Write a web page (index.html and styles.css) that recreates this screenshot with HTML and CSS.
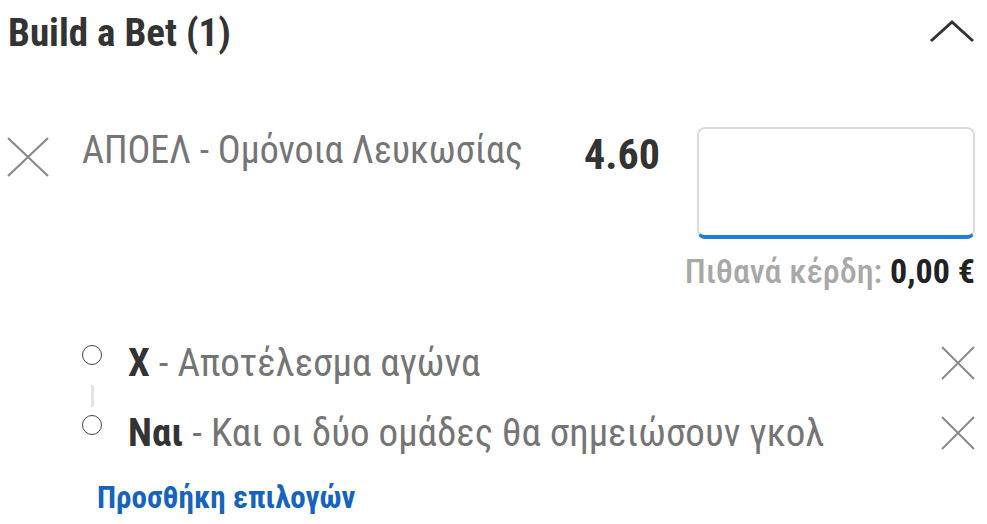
FILE: index.html
```html
<!DOCTYPE html>
<html lang="el">

<head>
  <meta charset="UTF-8">
  <meta name="viewport" content="width=device-width, initial-scale=1.0">
  <title>Build a Bet</title>
  <link rel="stylesheet" href="styles.css">
</head>

<body>
  <div class="slip">
    <!-- 标题 -->
    <div class="slip-head">
      <h2 class="slip-title">Build a Bet (1)</h2>
      <svg class="chevron" width="48" height="26" viewBox="0 0 48 26">
        <polyline points="3,23 24,4 45,23" fill="none" stroke="#333" stroke-width="3" />
      </svg>
    </div>

    <div class="bet-row">
      <svg class="remove big" width="42" height="40" viewBox="0 0 42 40">
        <path d="M1 1 L41 39 M41 1 L1 39" stroke="#8a8a8a" stroke-width="2.2" />
      </svg>
      <div class="bet-name">ΑΠΟΕΛ - Ομόνοια Λευκωσίας</div>
      <div class="bet-odds">4.60</div>
      <div class="stake"></div>
    </div>

    <div class="returns">Πιθανά κέρδη: <b>0,00 €</b></div>

    <ul class="legs">
      <li class="leg">
        <span class="dot"></span>
        <span class="leg-text"><b>X</b> - Αποτέλεσμα αγώνα</span>
        <svg class="remove" width="34" height="34" viewBox="0 0 34 34">
          <path d="M1 1 L33 33 M33 1 L1 33" stroke="#8a8a8a" stroke-width="2" />
        </svg>
      </li>
      <li class="leg">
        <span class="dot"></span>
        <span class="leg-text"><b>Ναι</b> - Και οι δύο ομάδες θα σημειώσουν γκολ</span>
        <svg class="remove" width="34" height="34" viewBox="0 0 34 34">
          <path d="M1 1 L33 33 M33 1 L1 33" stroke="#8a8a8a" stroke-width="2" />
        </svg>
      </li>
    </ul>

    <a class="add-link" href="#">Προσθήκη επιλογών</a>
  </div>
</body>

</html>
```

FILE: styles.css
```css
* {
  margin: 0;
  padding: 0;
  box-sizing: border-box;
}

body {
  background: #fff;
  font-family: "Roboto Condensed", "Liberation Sans Narrow", Roboto, sans-serif;
  color: #333;
}

.slip {
  width: 987px;
  padding: 0 12px 0 8px;
}

/* 头部 */
.slip-head {
  height: 66px;
  display: flex;
  align-items: center;
  justify-content: space-between;
}

.slip-title {
  font-size: 39px;
  line-height: 40px;
  font-weight: 700;
  color: #333;
}

.chevron {
  margin-right: -1px;
  margin-top: -4px;
}

/* 投注行 */
.bet-row {
  margin-top: 61px;
  display: grid;
  grid-template-columns: 74px 1fr auto 278px;
  align-items: start;
}

.remove.big {
  margin-top: 10px;
  margin-left: -1px;
}

.bet-name {
  font-size: 38px;
  line-height: 40px;
  color: #757575;
  padding-top: 3px;
}

.bet-odds {
  font-size: 42px;
  line-height: 40px;
  font-weight: 700;
  color: #333;
  padding-top: 8px;
  margin-right: 37px;
}

.stake {
  height: 112px;
  border: 2px solid #dcdcdc;
  border-bottom: 4px solid #1e7fd8;
  border-radius: 8px;
}

.returns {
  margin-top: 13px;
  text-align: right;
  font-size: 34px;
  line-height: 38px;
  font-weight: 500;
  color: #a8a8a8;
}

.returns b {
  font-weight: 700;
  color: #222;
}

/* 选项 */
.legs {
  list-style: none;
  margin-top: 51px;
}

.leg {
  display: flex;
  align-items: center;
  height: 40px;
  position: relative;
}

.leg + .leg {
  margin-top: 30px;
}

.leg + .leg::before {
  content: "";
  position: absolute;
  left: 83px;
  top: -26px;
  width: 3px;
  height: 22px;
  background: #e4e4e4;
}

.dot {
  width: 20px;
  height: 20px;
  border: 1.5px solid #444;
  border-radius: 50%;
  margin-left: 74px;
  margin-top: -13px;
}

.leg-text {
  flex: 1;
  margin-left: 26px;
  font-size: 39px;
  line-height: 40px;
  color: #757575;
  padding-top: 3px;
}

.leg-text b {
  color: #333;
}

.leg .remove {
  margin-top: 4px;
}

.add-link {
  display: inline-block;
  margin-top: 30px;
  margin-left: 89px;
  font-size: 31px;
  line-height: 34px;
  font-weight: 700;
  color: #1565c0;
  text-decoration: none;
}
```
